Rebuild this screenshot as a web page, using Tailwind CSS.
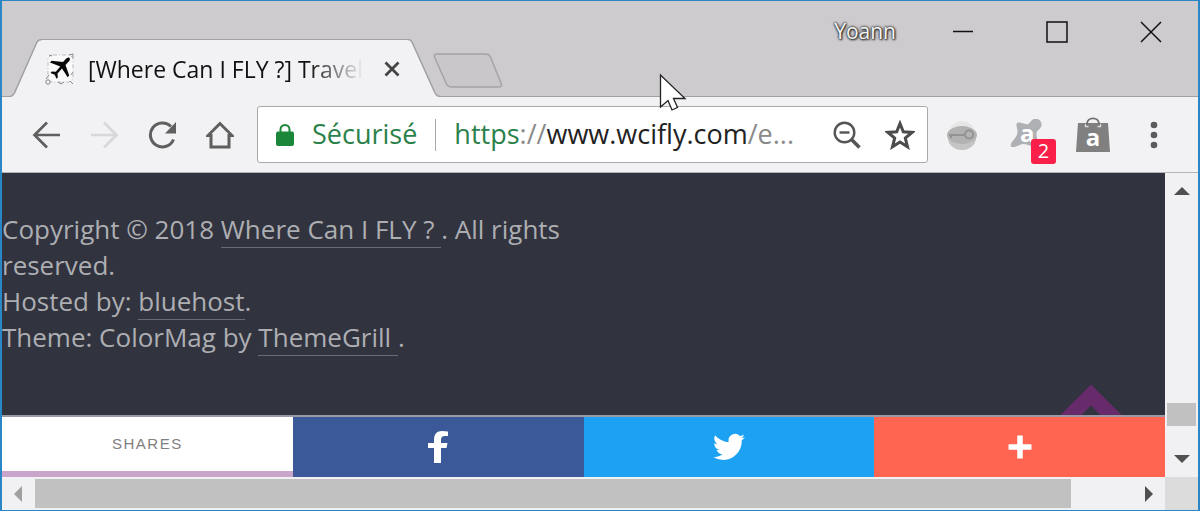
<!DOCTYPE html>
<html lang="fr">
<head>
  <meta charset="UTF-8">
  <meta name="viewport" content="width=device-width, initial-scale=1">
  <title>[Where Can I FLY ?] Travel</title>
  <script src="https://cdn.jsdelivr.net/npm/@tailwindcss/browser@4"></script>
</head>
<body class="font-['Open_Sans',sans-serif]">
  <div class="relative flex h-screen flex-col overflow-hidden border-x-2 border-y border-[#2b86c5] bg-[#f2f1f3]">

    <!-- Title bar -->
    <header class="flex h-24 shrink-0 justify-between border-b border-[#a09fa2] bg-[#cdcbce]">
      <div class="-mb-px flex items-end pl-2">
        <div class="flex h-[58px]">
          <svg class="h-[58px] w-8 shrink-0" viewBox="0 0 32 58" aria-hidden="true">
            <path d="M0 58V57.500Q3 57 4.500 54L27 3Q28.500.5 32 .5V58Z" fill="#f2f1f3"/>
            <path d="M0 57.500Q3 57 4.500 54L27 3Q28.500.5 32 .5" fill="none" stroke="#a09fa2" stroke-width="1.500"/>
          </svg>
          <div class="flex w-[366px] items-center border-t border-[#a09fa2] bg-[#f2f1f3] pl-0.5">
            <svg class="h-8 w-8 shrink-0" viewBox="0 0 32 32" aria-hidden="true">
              <rect x="4" y="2" width="25" height="27" rx="5" fill="#fafafa" stroke="#bbb" stroke-dasharray="4 2 1 2"/>
              <g fill="none" stroke="#888"><circle cx="4" cy="29" r="2.200"/><path d="M5 2l3 1M25 2l4-1v4M14 29l3 2 3-2M26 28l3 3M27 22l2-3M2 26l3-4"/></g>
              <path d="M25.500 5c1 1 .3 2.500-1.200 4L21.500 12l3.700 10.500-1.500 1.800L18 15.500l-4.500 5 .3 4-1.300 1.300-1.800-4.100-4.200-1.700 1.300-1.400 4 .1 4.500-5.200L6 9.500l1.500-1.800 11.500 1.300 2.500-2.700c1.500-1.500 3-2.300 4-1.300z" fill="#080808"/>
            </svg>
            <span class="ml-3 w-[276px] overflow-hidden whitespace-nowrap bg-linear-to-r from-[#111] from-80% to-transparent bg-clip-text text-[23px]/8 text-transparent">[Where Can I FLY ?] Travel</span>
            <button class="ml-4 flex h-6 w-6 items-center justify-center" aria-label="Fermer l'onglet">
              <svg class="h-4 w-4" viewBox="0 0 16 16" fill="none" stroke="#444" stroke-width="2.800"><path d="M1.500 1.500l13 13M14.500 1.500l-13 13"/></svg>
            </button>
          </div>
          <svg class="h-[58px] w-8 shrink-0" viewBox="0 0 32 58" aria-hidden="true">
            <path d="M0 58V.5Q3 .5 4 3L27 54Q28.500 57 32 57.500V58Z" fill="#f2f1f3"/>
            <path d="M0 .5Q3 .5 4 3L27 54Q28.500 57 32 57.500" fill="none" stroke="#a09fa2" stroke-width="1.500"/>
          </svg>
        </div>
        <button class="-ml-2 mb-2" aria-label="Nouvel onglet">
          <svg class="h-9 w-[72px]" viewBox="0 0 72 36" fill="#c9c7ca" stroke="#a5a3a6" stroke-width="1.500"><path d="M5 1H54Q57 1 58.500 4L69 30Q70.500 34 67 34H20Q16 34 14.500 31L2.500 4Q1.500 1 5 1Z"/></svg>
        </button>
      </div>
      <div class="flex h-[61px] items-center">
        <button class="mr-5 text-[21px] text-[#f5f5f5] [text-shadow:0_0_3px_#222,0_0_2px_#222,1px_1px_2px_#333]">Yoann</button>
        <button class="flex h-full w-[94px] items-center justify-center" aria-label="Réduire">
          <svg class="h-[22px] w-[22px]" viewBox="0 0 22 22" stroke="#111" stroke-width="1.500"><path d="M1 10.500h20"/></svg>
        </button>
        <button class="flex h-full w-[94px] items-center justify-center" aria-label="Agrandir">
          <svg class="h-[22px] w-[22px]" viewBox="0 0 22 22" fill="none" stroke="#111" stroke-width="1.500"><path d="M1 1h20v20H1z"/></svg>
        </button>
        <button class="flex h-full w-[94px] items-center justify-center" aria-label="Fermer">
          <svg class="h-[22px] w-[22px]" viewBox="0 0 22 22" fill="none" stroke="#111" stroke-width="1.500"><path d="M1 1l20 20M21 1L1 21"/></svg>
        </button>
      </div>
    </header>

    <!-- Toolbar -->
    <nav class="flex h-[76px] shrink-0 items-center border-b border-[#b5b4b6] pl-[30px] pr-10">
      <div class="flex gap-[30px]">
        <button aria-label="Retour">
          <svg class="h-7 w-7" viewBox="0 0 28 28" fill="none" stroke="#5f5f5f" stroke-width="2.700"><path d="M28 14H3M15 1.500L2.500 14 15 26.500"/></svg>
        </button>
        <button aria-label="Avancer" disabled>
          <svg class="h-7 w-7" viewBox="0 0 28 28" fill="none" stroke="#d8d7d9" stroke-width="2.700"><path d="M1 14h25M14 1.500L26.500 14 14 26.500"/></svg>
        </button>
        <button aria-label="Actualiser">
          <svg class="h-7 w-7" viewBox="0 0 28 28"><path d="M25.500 18.500A12 12 0 1 1 23 5.500" fill="none" stroke="#5f5f5f" stroke-width="3"/><path d="M28 1v11.500H17z" fill="#5f5f5f"/></svg>
        </button>
        <button aria-label="Accueil">
          <svg class="h-7 w-7" viewBox="0 0 28 28" fill="none" stroke="#5f5f5f" stroke-width="3"><path d="M14 2.500L2 14.500H5V26H23V14.500H26Z"/></svg>
        </button>
      </div>

      <div class="ml-[23px] flex h-[57px] min-w-0 flex-1 items-center rounded-[3px] border border-[#a9a8aa] bg-white pl-[18px] pr-3 text-[27px]">
        <svg class="h-6 w-[18px] shrink-0" viewBox="0 0 18 24" aria-hidden="true"><path d="M4.500 9V6.500a4.500 4.500 0 0 1 9 0V9" fill="none" stroke="#1a8639" stroke-width="2"/><rect y="8.500" width="18" height="14.500" rx="2" fill="#1a8639"/></svg>
        <span class="ml-[18px] text-[#2b814a]">Sécurisé</span>
        <span class="mx-[18px] h-8 w-px bg-[#aaa]"></span>
        <div class="min-w-0 flex-1 whitespace-nowrap text-[#222] outline-none" role="textbox" contenteditable="true" spellcheck="false" aria-label="Adresse"><span class="text-[#2b814a]">https</span><span class="text-[#8a8a8a]">://</span>www.wcifly.com<span class="text-[#8a8a8a]">/e...</span></div>
        <button aria-label="Zoom arrière">
          <svg class="h-7 w-7" viewBox="0 0 28 28" fill="none" stroke="#555"><circle cx="11.500" cy="11.500" r="9.800" stroke-width="2.400"/><path d="M6.500 11.500h10" stroke-width="2.400"/><path d="M18.500 18.500l8 8" stroke-width="3.600"/></svg>
        </button>
        <button class="ml-6" aria-label="Ajouter aux favoris">
          <svg class="h-[30px] w-[30px]" viewBox="0 0 30 30" fill="none" stroke="#4c4c4c" stroke-width="3"><path d="M15 3.500l3.300 8.300 8.900.6-6.900 5.700 2.200 8.700L15 22l-7.500 4.800 2.200-8.700-6.900-5.700 8.900-.6z"/></svg>
        </button>
      </div>

      <button class="ml-[18px]" aria-label="Extension clé">
        <svg class="h-8 w-8" viewBox="0 0 32 32"><ellipse cx="16" cy="12" rx="12" ry="10" fill="#e6e6e6"/><ellipse cx="16" cy="19" rx="14" ry="12" fill="#c4c4c4"/><ellipse cx="16" cy="16" rx="15" ry="9" fill="#b2b2b2"/><path d="M3 16h16M5 16v3" stroke="#939393" stroke-width="2"/><circle cx="23" cy="15.500" r="4" fill="#b5b5b5" stroke="#939393" stroke-width="2"/></svg>
      </button>
      <button class="relative ml-8" aria-label="Avast Online Security">
        <svg class="h-8 w-8" viewBox="0 0 32 32"><path d="M7 4c4-1.500 7 2 11 1 2-.5 2.500-4 6-5 4.500-1 8 2 7.500 6-.4 4-4.500 5-5 8-.5 4 2.500 9 1 14-6 .500-9-3-14-3-4 0-7 3.500-12 3-2-2 0-4.500 2-7 3-3.500 4-5.500 4-9C7.500 9 5.500 7 7 4z" fill="#aeb0b3"/></svg>
        <span class="absolute left-2.5 top-0 text-2xl/7 font-bold text-white">a</span>
        <span class="absolute left-[21px] top-5 flex h-[25px] w-[25px] items-center justify-center rounded-[3px] bg-[#f91f48] text-xl text-white">2</span>
      </button>
      <button class="relative ml-[34px] h-9 w-[34px]" aria-label="Avast SafePrice">
        <svg class="h-9 w-[34px]" viewBox="0 0 34 36"><path d="M2 6h30l2 29H0z" fill="#808080"/><path d="M11 10V7C11-.500 23-.500 23 7v3" fill="none" stroke="#707070" stroke-width="1.800"/><path d="M9.500 7v2.500h3M24.500 7v2.500h-3" fill="none" stroke="#ddd" stroke-width="1.300"/></svg>
        <span class="absolute inset-x-0 top-1.5 text-2xl/7 font-bold text-white">a</span>
      </button>
      <button class="ml-10" aria-label="Menu">
        <svg class="h-7 w-2" viewBox="0 0 8 28" fill="#5c5c5c"><circle cx="4" cy="4" r="3.300"/><circle cx="4" cy="14" r="3.300"/><circle cx="4" cy="24" r="3.300"/></svg>
      </button>
    </nav>

    <div class="flex min-h-0 flex-1">
      <!-- Page -->
      <main class="flex min-w-0 flex-1 flex-col bg-[#31333f]">
        <footer class="relative min-h-0 flex-1 overflow-hidden pt-[38px] text-[26px]/9 text-[#adaeb2]">
          <p class="w-1/2">Copyright © 2018 <a href="#" class="border-b border-[#696b75]">Where Can I FLY ? </a>. All rights reserved.<br>Hosted by: <a href="#" class="border-b border-[#696b75]">bluehost</a>.<br>Theme: ColorMag by <a href="#" class="border-b border-[#696b75]">ThemeGrill </a>.</p>
          <a href="#" class="absolute -bottom-3 right-10" aria-label="Haut de page">
            <svg class="h-11 w-[68px]" viewBox="0 0 68 44" fill="none" stroke="#672a6b" stroke-width="15"><path d="M0 46L34 12 68 46"/></svg>
          </a>
        </footer>
        <div class="grid h-[62px] shrink-0 grid-cols-4 border-t-2 border-[#9b99a3]">
          <div class="flex items-center justify-center border-b-[6px] border-[#c9a5cc] bg-white font-['Liberation_Sans',sans-serif] text-[15px] tracking-widest text-[#808080]">SHARES</div>
          <a href="#" class="flex items-center justify-center bg-[#3b5998]" aria-label="Facebook">
            <svg class="h-8 w-5" viewBox="0 0 20 32" fill="#fff"><path d="M6 32V17H0v-5h6V9c0-6 3-9 8-9 2 0 4 .2 6 .5V5h-3c-3 0-4 1.500-4 4v3h6.500l-1 5H13v15z"/></svg>
          </a>
          <a href="#" class="flex items-center justify-center bg-[#1da1f2]" aria-label="Twitter">
            <svg class="h-8 w-8" viewBox="0 0 24 24" fill="#fff"><path d="M23.950 4.570a10 10 0 0 1-2.820.770 4.960 4.960 0 0 0 2.160-2.720c-.95.550-2 .950-3.130 1.180a4.920 4.920 0 0 0-8.380 4.480C7.690 8.100 4.070 6.130 1.640 3.160a4.920 4.920 0 0 0 1.520 6.570 4.900 4.900 0 0 1-2.230-.61v.06a4.920 4.920 0 0 0 3.950 4.830 5 5 0 0 1-2.210.08 4.940 4.940 0 0 0 4.600 3.420A9.870 9.870 0 0 1 0 19.540a13.990 13.990 0 0 0 7.550 2.210c9.050 0 14-7.500 14-13.980 0-.21 0-.42-.02-.63a9.940 9.940 0 0 0 2.420-2.570z"/></svg>
          </a>
          <a href="#" class="flex items-center justify-center bg-[#ff6550]" aria-label="Plus">
            <svg class="h-6 w-6" viewBox="0 0 24 24" stroke="#fff" stroke-width="5.500"><path d="M12 .5v23M.5 12h23"/></svg>
          </a>
        </div>
      </main>

      <!-- Vertical scrollbar -->
      <div class="flex w-[33px] shrink-0 flex-col items-center justify-between bg-[#f1f0f2] py-3.5">
        <button aria-label="Défiler vers le haut"><svg class="h-2 w-4" viewBox="0 0 16 8" fill="#505050"><path d="M8 0l8 8H0z"/></svg></button>
        <div class="mb-[29px] mt-auto h-[23px] w-[29px] bg-[#c1c1c1]"></div>
        <button aria-label="Défiler vers le bas"><svg class="h-2 w-4" viewBox="0 0 16 8" fill="#505050"><path d="M0 0h16L8 8z"/></svg></button>
      </div>
    </div>

    <!-- Horizontal scrollbar -->
    <div class="flex h-[33px] shrink-0">
      <div class="flex min-w-0 flex-1 items-center bg-[#f1f0f2] pl-3 pr-3">
        <button aria-label="Défiler à gauche"><svg class="h-4 w-2" viewBox="0 0 8 16" fill="#a0a0a0"><path d="M8 0v16L0 8z"/></svg></button>
        <div class="ml-[13px] h-[29px] w-[91%] bg-[#c1c1c1]"></div>
        <button class="ml-auto" aria-label="Défiler à droite"><svg class="h-4 w-2" viewBox="0 0 8 16" fill="#505050"><path d="M0 0l8 8-8 8z"/></svg></button>
      </div>
      <div class="w-[33px] shrink-0 bg-[#dcdcdc]"></div>
    </div>

    <!-- Mouse pointer -->
    <svg class="pointer-events-none absolute left-[657px] top-[72px] h-10 w-7" viewBox="0 0 28 40" fill="#fff" stroke="#222" stroke-width="1.300" aria-hidden="true"><path d="M1.500 2v32l7.500-6.500 4 9.500 5.500-2.500-4-9H26z"/></svg>
  </div>
</body>
</html>
